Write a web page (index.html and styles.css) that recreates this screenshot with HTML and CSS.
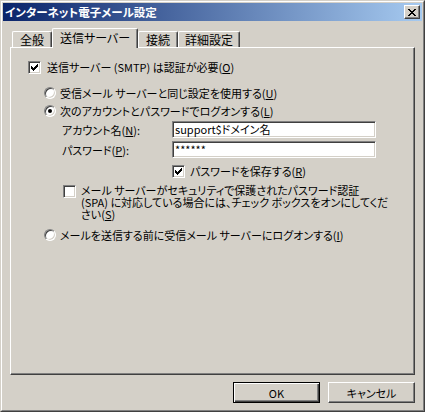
FILE: index.html
```html
<!DOCTYPE html>
<html lang="ja">
<head>
    <meta charset="UTF-8">
    <title>インターネット電子メール設定</title>
    <link rel="stylesheet" href="styles.css">
</head>
<body>
    <div class="window">
        <div class="frame">
            <div class="titlebar">
                <span class="title">インターネット電子メール設定</span>
                <div class="close">
                    <svg width="8" height="7" viewBox="0 0 8 7" shape-rendering="crispEdges"><path d="M0 0h2v1H0zM6 0h2v1H6zM1 1h2v1H1zM5 1h2v1H5zM2 2h4v1H2zM3 3h2v1H3zM2 4h4v1H2zM1 5h2v1H1zM5 5h2v1H5zM0 6h2v1H0zM6 6h2v1H6z" fill="#000"/></svg>
                </div>
            </div>
            <div class="content">
                <div class="tabs">
                    <div class="tab tab-general">全般</div>
                    <div class="tab tab-active">送信サーバー</div>
                    <div class="tab tab-conn">接続</div>
                    <div class="tab tab-adv">詳細設定</div>
                </div>
                <div class="panel">
                    <div class="row row-auth">
                        <span class="checkbox"><svg width="7" height="7" viewBox="0 0 7 7" shape-rendering="crispEdges"><path d="M6 0h1v1H6zM5 1h2v1H5zM0 2h1v1H0zM4 2h3v1H4zM0 3h2v1H0zM3 3h3v1H3zM0 4h5v1H0zM1 5h3v1H1zM2 6h1v1H2z" fill="#000"/></svg></span>
                        <span class="label">送信サーバー (SMTP) は認証が必要(<u>O</u>)</span>
                    </div>
                    <div class="row row-radio row-same">
                        <span class="radio"></span>
                        <span class="label">受信メール サーバーと同じ設定を使用する(<u>U</u>)</span>
                    </div>
                    <div class="row row-radio row-logon">
                        <span class="radio"><span class="dot"></span></span>
                        <span class="label">次のアカウントとパスワードでログオンする(<u>L</u>)</span>
                    </div>
                    <div class="field field-account">
                        <span class="field-label">アカウント名(<u>N</u>):</span>
                        <span class="input">support$ドメイン名</span>
                    </div>
                    <div class="field field-pass">
                        <span class="field-label">パスワード(<u>P</u>):</span>
                        <span class="input">******</span>
                    </div>
                    <div class="row row-save">
                        <span class="checkbox"><svg width="7" height="7" viewBox="0 0 7 7" shape-rendering="crispEdges"><path d="M6 0h1v1H6zM5 1h2v1H5zM0 2h1v1H0zM4 2h3v1H4zM0 3h2v1H0zM3 3h3v1H3zM0 4h5v1H0zM1 5h3v1H1zM2 6h1v1H2z" fill="#000"/></svg></span>
                        <span class="label">パスワードを保存する(<u>R</u>)</span>
                    </div>
                    <div class="row-spa">
                        <span class="checkbox"></span>
                        <span class="label-multi">メール サーバーがセキュリティで保護されたパスワード認証<br>(SPA) に対応している場合には、チェック ボックスをオンにしてくだ<br>さい(<u>S</u>)</span>
                    </div>
                    <div class="row row-radio row-before">
                        <span class="radio"></span>
                        <span class="label">メールを送信する前に受信メール サーバーにログオンする(<u>I</u>)</span>
                    </div>
                </div>
                <div class="buttons">
                    <div class="btn btn-default"><span>OK</span></div>
                    <div class="btn"><span>キャンセル</span></div>
                </div>
            </div>
        </div>
    </div>
</body>
</html>
```

FILE: styles.css
```css
body {
    margin: 0;
    background: #d4d0c8;
    font-family: "Noto Sans CJK JP", "DejaVu Sans", sans-serif;
    font-size: 11px;
    font-feature-settings: "palt";
    color: #000;
}
.window {
    width: 425px;
    height: 412px;
    box-sizing: border-box;
    border: 1px solid;
    border-color: #d4d0c8 #404040 #404040 #d4d0c8;
}
.frame {
    height: 100%;
    box-sizing: border-box;
    border: 1px solid;
    border-color: #fff #808080 #808080 #fff;
    padding: 1px;
}
.titlebar {
    height: 18px;
    display: flex;
    align-items: center;
    justify-content: space-between;
    background: linear-gradient(to right, #0a246a, #a6caf0);
    padding-left: 2px;
}
.title {
    color: #fff;
    font-weight: bold;
    font-size: 11.5px;
    line-height: 18px;
}
.close {
    width: 16px;
    height: 14px;
    box-sizing: border-box;
    margin-right: 2px;
    background: #d4d0c8;
    border: 1px solid;
    border-color: #fff #404040 #404040 #fff;
    box-shadow: inset -1px -1px #808080;
    display: flex;
    align-items: center;
    justify-content: center;
    padding: 0 1px 0 0;
}
.content {
    padding: 0 7px;
}
.tabs {
    margin-top: 7px;
    height: 19px;
    display: flex;
    align-items: flex-end;
    padding-left: 2px;
    font-size: 12px;
}
.tab {
    height: 16px;
    box-sizing: border-box;
    border: 1px solid;
    border-bottom: none;
    border-color: #fff #404040 #404040 #fff;
    border-radius: 2px 2px 0 0;
    box-shadow: inset -1px 0 #808080;
    display: flex;
    align-items: center;
    justify-content: center;
    line-height: 14px;
    padding-top: 1px;
}
.tab-general { width: 40px; }
.tab-conn { width: 40px; }
.tab-adv { width: 62px; }
.tab-active {
    width: 86px;
    height: 20px;
    margin-bottom: -1px;
    position: relative;
    z-index: 1;
    background: #d4d0c8;
    padding-bottom: 3px;
}
.panel {
    height: 328px;
    box-sizing: border-box;
    border: 1px solid;
    border-color: #fff #404040 #404040 #fff;
    box-shadow: inset -1px -1px #808080;
    padding-top: 11px;
}
.row {
    height: 16px;
    display: flex;
    align-items: center;
}
.label, .field-label, .label-multi {
    line-height: 12px;
    white-space: nowrap;
}
.checkbox {
    width: 13px;
    height: 13px;
    box-sizing: border-box;
    background: #fff;
    border: 1px solid;
    border-color: #808080 #fff #fff #808080;
    box-shadow: inset 1px 1px #404040, inset -1px -1px #d4d0c8;
    display: flex;
    align-items: center;
    justify-content: center;
    flex: none;
}
.radio {
    width: 12px;
    height: 12px;
    box-sizing: border-box;
    border-radius: 50%;
    background: #fff;
    border: 1px solid;
    border-color: #808080 #fff #fff #808080;
    box-shadow: inset 1px 1px #404040, inset -1px -1px #d4d0c8;
    display: flex;
    align-items: center;
    justify-content: center;
    flex: none;
}
.dot {
    width: 4px;
    height: 4px;
    border-radius: 50%;
    background: #000;
}
.row-auth { margin-left: 17px; gap: 6px; }
.row-radio { margin-left: 33px; gap: 4px; }
.row-same { margin-top: 10px; }
.row-logon { margin-top: 2px; }
.field {
    display: flex;
    align-items: center;
    margin-left: 51px;
}
.field-account { margin-top: 2px; }
.field-pass { margin-top: 3px; }
.field-label { width: 110px; }
.input {
    width: 204px;
    height: 17px;
    box-sizing: border-box;
    background: #fff;
    border: 1px solid;
    border-color: #808080 #fff #fff #808080;
    box-shadow: inset 1px 1px #404040, inset -1px -1px #d4d0c8;
    padding-left: 2px;
    line-height: 15px;
}
.row-save { margin-left: 161px; margin-top: 5px; gap: 5px; }
.row-spa {
    display: flex;
    align-items: flex-start;
    margin-left: 52px;
    margin-top: 5px;
    gap: 5px;
}
.row-spa .checkbox { margin-top: 1px; }
.row-before { margin-top: 7px; }
.buttons {
    display: flex;
    justify-content: flex-end;
    gap: 8px;
    margin-top: 7px;
}
.btn {
    width: 87px;
    height: 21px;
    box-sizing: border-box;
    border: 1px solid;
    border-color: #fff #404040 #404040 #fff;
    box-shadow: inset -1px -1px #808080;
    display: flex;
    align-items: center;
    justify-content: center;
}
.btn-default {
    border: 1px solid #000;
    box-shadow: inset 1px 1px #fff, inset -1px -1px #404040, inset -2px -2px #808080;
}
```
